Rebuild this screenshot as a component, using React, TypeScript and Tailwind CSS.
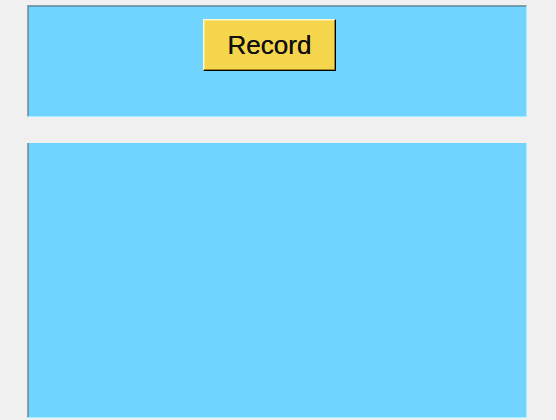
export default function App() {
  return (
    <div className="w-[556px] h-[420px] bg-[#f0f0f0] pl-[27px] pt-[5px] flex flex-col gap-[26px]" style={{ fontFamily: '"Liberation Sans", Arial, sans-serif' }}>
      <div className="w-[500px] h-[112px] bg-[#71d4ff] border-l border-t border-l-[#a0a0a0] border-t-[#8a9ea8] border-r border-b border-r-[#a8f0ff] border-b-[#a8f0ff] shadow-[inset_1px_1px_0_#5a9cba]">
        <div className="pl-[175px] pt-[13px]">
          <div className="w-[133px] h-[52px] bg-[#f5d54b] border-l border-t border-l-[#fff8d0] border-t-[#fff8d0] border-r border-b border-r-black border-b-black shadow-[inset_-1px_-1px_0_#9c8420,inset_1px_1px_0_#fbe78a] flex items-center justify-center text-[26px] text-[#111] [text-shadow:0_0_0.4px_#111]">
            Record
          </div>
        </div>
      </div>
      <div className="w-[500px] h-[275px] bg-[#71d4ff] border-l border-l-[#a0a0a0] border-r border-b border-r-[#a8f0ff] border-b-[#a8f0ff] shadow-[inset_1px_0_0_#5a9cba]"></div>
    </div>
  );
}
